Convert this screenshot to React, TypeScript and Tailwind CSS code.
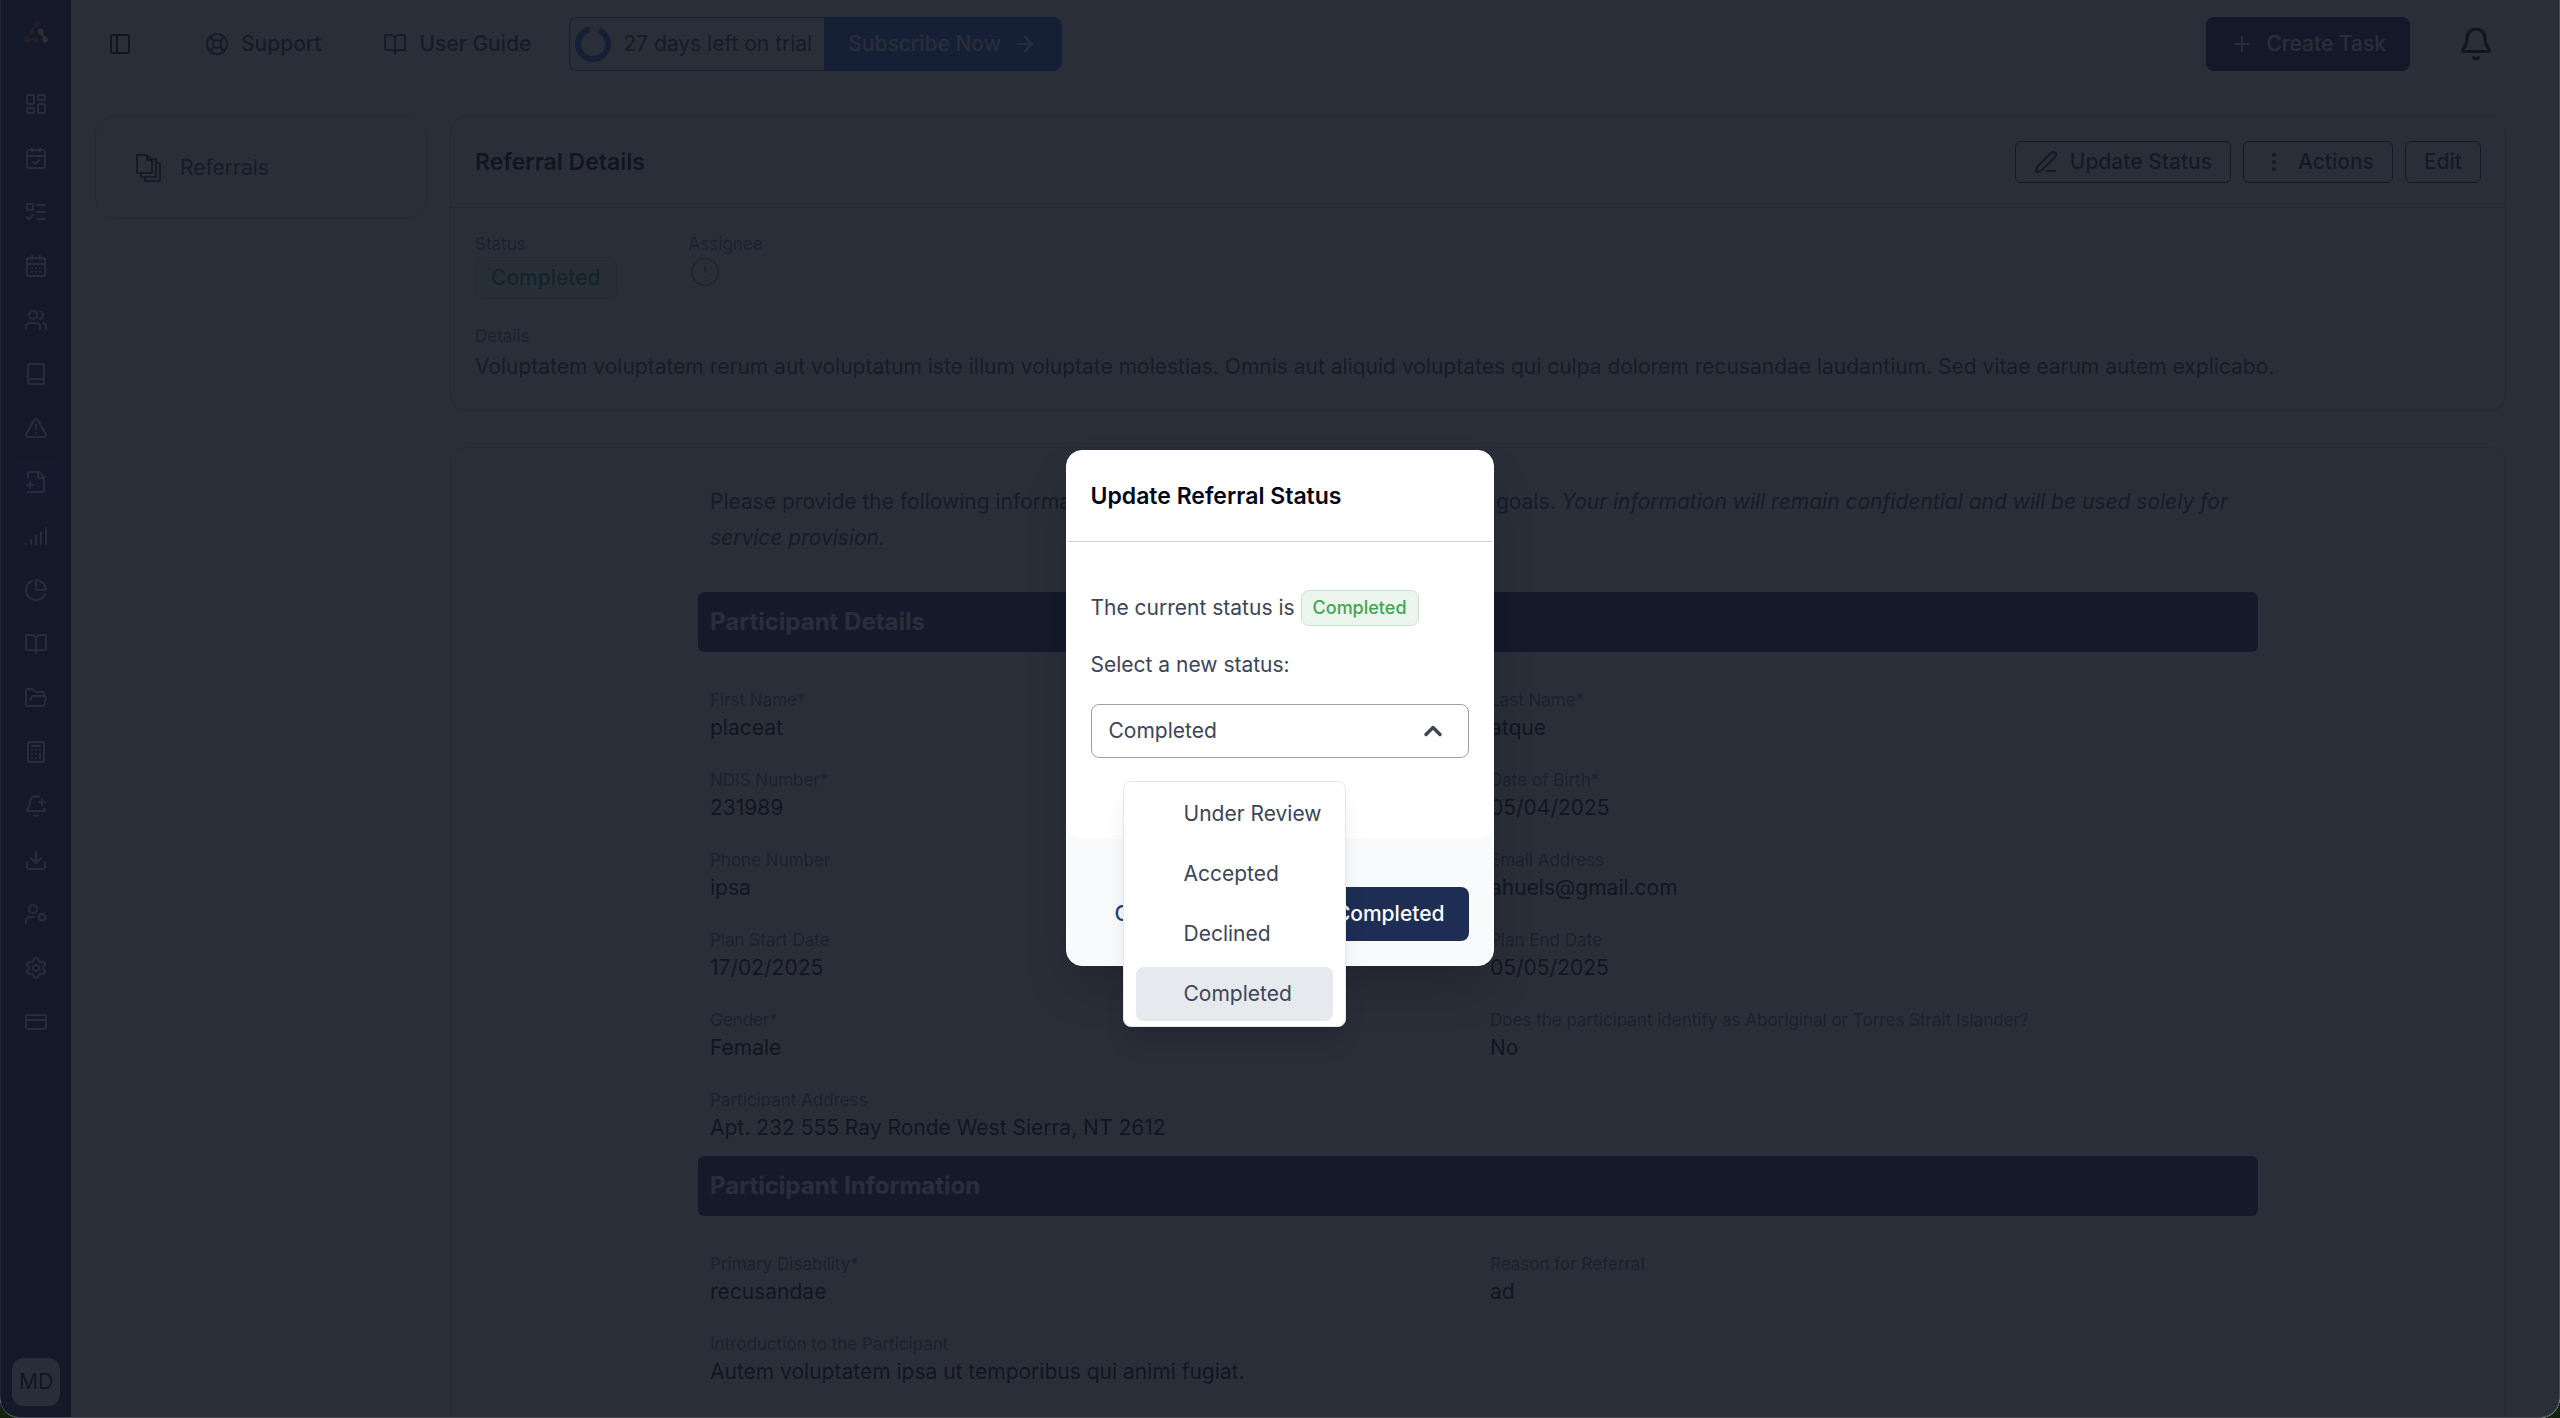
import { useState } from "react";
import type { ReactNode } from "react";
import {
  ArrowRight,
  Bell,
  BellPlus,
  Book,
  BookOpen,
  Calculator,
  CalendarCheck,
  CalendarDays,
  ChartPie,
  ChevronUp,
  CircleAlert,
  CreditCard,
  Download,
  EllipsisVertical,
  FolderOpen,
  LayoutDashboard,
  LifeBuoy,
  ListTodo,
  PanelLeft,
  PenLine,
  Plus,
  Settings,
  Signal,
  TriangleAlert,
  UserCog,
  Users,
} from "lucide-react";

function FileAdd({ className }: { className?: string }) {
  return (
    <svg
      viewBox="0 0 24 24"
      fill="none"
      stroke="currentColor"
      strokeWidth="2"
      strokeLinecap="round"
      strokeLinejoin="round"
      className={className}
    >
      <path d="M4 22h14a2 2 0 0 0 2-2V7l-5-5H6a2 2 0 0 0-2 2v4" />
      <path d="M14 2v4a2 2 0 0 0 2 2h4" />
      <path d="M3 15h6" />
      <path d="M6 12v6" />
    </svg>
  );
}

function FileStack({ className }: { className?: string }) {
  return (
    <svg viewBox="0 0 26 30" fill="none" stroke="currentColor" strokeWidth="1.5" className={className}>
      <path d="M1 2h10l5 5v13H1z" />
      <path d="M11 2v5h5" />
      <path d="M5 20v4h15V6h-4" />
      <path d="M9 24v4h15V10h-4" />
    </svg>
  );
}

function Logo() {
  return (
    <svg viewBox="0 0 24 22" className="h-[22px] w-6">
      <g stroke="#c2502c" fill="#c2502c" strokeLinecap="round">
        <path d="M12.5 3 7.5 10.5 2.8 18.5H12" fill="none" strokeWidth="2" />
        <circle cx="12.5" cy="3" r="2.5" />
        <circle cx="7.5" cy="10.5" r="2.5" />
        <circle cx="2.8" cy="18.5" r="2.5" />
        <circle cx="12" cy="18.5" r="2.5" />
      </g>
      <g stroke="#ffffff" fill="#ffffff">
        <path d="M16.5 11 21 18" strokeWidth="2.5" />
        <circle cx="16.5" cy="10.5" r="2.5" />
        <circle cx="21" cy="18.5" r="2.5" />
      </g>
    </svg>
  );
}

const navItems = [
  { icon: LayoutDashboard, label: "Dashboard" },
  { icon: CalendarCheck, label: "Roster" },
  { icon: ListTodo, label: "Tasks" },
  { icon: CalendarDays, label: "Calendar" },
  { icon: Users, label: "Participants" },
  { icon: Book, label: "Notes" },
  { icon: TriangleAlert, label: "Incidents" },
  { icon: FileAdd, label: "Referrals", active: true },
  { icon: Signal, label: "Activity" },
  { icon: ChartPie, label: "Reports" },
  { icon: BookOpen, label: "Policies" },
  { icon: FolderOpen, label: "Documents" },
  { icon: Calculator, label: "Billing" },
  { icon: BellPlus, label: "Reminders" },
  { icon: Download, label: "Exports" },
  { icon: UserCog, label: "Team" },
  { icon: Settings, label: "Settings" },
  { icon: CreditCard, label: "Subscription" },
];

const participantDetails = [
  ["First Name*", "placeat"],
  ["Last Name*", "atque"],
  ["NDIS Number*", "231989"],
  ["Date of Birth*", "05/04/2025"],
  ["Phone Number", "ipsa"],
  ["Email Address", "ahuels@gmail.com"],
  ["Plan Start Date", "17/02/2025"],
  ["Plan End Date", "05/05/2025"],
  ["Gender*", "Female"],
  ["Does the participant identify as Aboriginal or Torres Strait Islander?", "No"],
  ["Participant Address", "Apt. 232 555 Ray Ronde West Sierra, NT 2612"],
];

const statuses = ["Under Review", "Accepted", "Declined", "Completed"];

function Sidebar() {
  return (
    <aside className="flex w-[71px] shrink-0 flex-col items-center border-l border-slate-400 bg-[#1d2d54] pt-[21px] pb-3">
      <Logo />
      <nav className="mt-[38px] flex flex-1 flex-col gap-2">
        {navItems.map(({ icon: Icon, label, active }) => (
          <a
            key={label}
            href="#"
            aria-label={label}
            className={
              active
                ? "flex h-[46px] w-12 items-center justify-center rounded-lg bg-[#1e3a78] text-slate-200"
                : "flex h-[46px] w-12 items-center justify-center rounded-lg text-slate-200"
            }
          >
            <Icon className="size-6" />
          </a>
        ))}
      </nav>
      <button className="flex size-12 items-center justify-center rounded-xl bg-slate-100 text-[21px] text-slate-950">
        MD
      </button>
    </aside>
  );
}

function TopBar() {
  return (
    <header className="mr-[29px] flex items-center border-r border-b border-slate-200 pt-[17px] pr-9 pb-[21px] pl-[37px] font-medium text-slate-700">
      <button aria-label="Toggle sidebar" className="mr-[49px] text-slate-950">
        <PanelLeft className="size-6" />
      </button>
      <div className="flex gap-[14px]">
        <a href="#" className="flex h-[54px] items-center gap-3 rounded-lg border border-slate-100 px-[23px]">
          <LifeBuoy className="size-6" />
          Support
        </a>
        <a href="#" className="flex h-[54px] items-center gap-3 rounded-lg border border-slate-100 px-[23px]">
          <BookOpen className="size-6" />
          User Guide
        </a>
        <div className="flex h-[54px] overflow-hidden rounded-lg border border-[#2f6be0]">
          <div className="flex items-center gap-3 pr-3 pl-[5px] font-normal">
            <svg viewBox="0 0 36 36" className="size-9">
              <circle cx="18" cy="18" r="15" fill="none" stroke="#cbdcfb" strokeWidth="6" />
              <circle
                cx="18"
                cy="18"
                r="15"
                fill="none"
                stroke="#2f6be0"
                strokeWidth="6"
                pathLength="100"
                strokeDasharray="90 10"
                strokeDashoffset="-5"
                transform="rotate(-85 18 18)"
              />
            </svg>
            27 days left on trial
          </div>
          <a href="#" className="flex items-center gap-3 bg-[#2f6be0] px-6 text-slate-100">
            Subscribe Now
            <ArrowRight className="size-6" />
          </a>
        </div>
      </div>
      <button className="ml-auto flex h-[54px] items-center gap-3 rounded-lg bg-[#1d2d54] px-6 text-white">
        <Plus className="size-6" />
        Create Task
      </button>
      <button aria-label="Notifications" className="ml-12 text-slate-950">
        <Bell className="size-9" />
      </button>
    </header>
  );
}

function OutlineButton({ children }: { children: ReactNode }) {
  return (
    <button className="flex h-[42px] items-center gap-3 rounded-md border border-[#1d2d54] px-[18px] font-medium text-slate-800">
      {children}
    </button>
  );
}

function Field({ label, value }: { label: string; value: string }) {
  return (
    <div className="px-3">
      <dt className="text-[17px] leading-6 text-slate-500">{label}</dt>
      <dd className="leading-8 text-slate-950">{value}</dd>
    </div>
  );
}

function SectionTitle({ children }: { children: ReactNode }) {
  return (
    <h3 className="flex h-[60px] items-center rounded-md bg-[#1e3566] px-3 text-2xl font-bold text-white">
      {children}
    </h3>
  );
}

function ReferralDetails() {
  return (
    <section className="rounded-2xl border border-slate-300 shadow-sm">
      <div className="flex items-center justify-between border-b border-slate-300 px-6 py-6">
        <h2 className="text-[23px] font-semibold text-slate-950">Referral Details</h2>
        <div className="flex gap-3">
          <OutlineButton>
            <PenLine className="size-6" />
            Update Status
          </OutlineButton>
          <OutlineButton>
            <EllipsisVertical className="size-6" />
            Actions
          </OutlineButton>
          <OutlineButton>Edit</OutlineButton>
        </div>
      </div>
      <div className="px-6 pt-6 pb-7">
        <div className="flex gap-[72px]">
          <div>
            <p className="text-[17px] leading-6 text-slate-500">Status</p>
            <span className="mt-px flex h-[42px] items-center rounded-lg border border-emerald-200 bg-emerald-50 px-[15px] font-medium text-emerald-600">
              Completed
            </span>
          </div>
          <div>
            <p className="text-[17px] leading-6 text-slate-500">Assignee</p>
            <CircleAlert strokeWidth={1} className="size-8 text-slate-500" />
          </div>
        </div>
        <p className="mt-[25px] text-[17px] leading-6 text-slate-500">Details</p>
        <p className="mt-1 leading-[30px] text-slate-700">
          Voluptatem voluptatem rerum aut voluptatum iste illum voluptate molestias. Omnis aut aliquid
          voluptates qui culpa dolorem recusandae laudantium. Sed vitae earum autem explicabo.
        </p>
      </div>
    </section>
  );
}

function ReferralForm() {
  return (
    <section className="mt-9 rounded-2xl border border-slate-300 pt-9 pb-12">
      <div className="mx-auto max-w-[1560px]">
        <p className="mb-9 px-3 leading-9 text-slate-700">
          Please provide the following information to help us understand your needs and goals.{" "}
          <em>Your information will remain confidential and will be used solely for service provision.</em>
        </p>
        <SectionTitle>Participant Details</SectionTitle>
        <dl className="grid grid-cols-2 gap-y-6 pt-9 pb-3">
          {participantDetails.map(([label, value]) => (
            <Field key={label} label={label} value={value} />
          ))}
        </dl>
        <SectionTitle>Participant Information</SectionTitle>
        <dl className="grid grid-cols-2 gap-y-6 pt-9 pb-3">
          <Field label="Primary Disability*" value="recusandae" />
          <Field label="Reason for Referral" value="ad" />
          <div className="col-span-2">
            <Field label="Introduction to the Participant" value="Autem voluptatem ipsa ut temporibus qui animi fugiat." />
          </div>
        </dl>
      </div>
    </section>
  );
}

function UpdateStatusDialog() {
  const [status, setStatus] = useState("Completed");

  return (
    <div
      role="dialog"
      aria-labelledby="dialog-title"
      className="w-[428px] rounded-2xl border border-white bg-slate-50 shadow-2xl"
    >
      <div className="rounded-2xl bg-white">
        <h2
          id="dialog-title"
          className="flex h-[91px] items-center border-b border-gray-300 px-6 text-[23px] font-semibold text-slate-950"
        >
          Update Referral Status
        </h2>
        <div className="flex flex-col gap-6 px-6 pt-12 pb-[81px] text-[#3d4556]">
          <p className="flex items-center gap-[6px]">
            The current status is
            <span className="flex h-9 items-center rounded-lg border border-[#c5e6ca] bg-[#ebf5ed] px-[11px] text-lg font-medium text-[#43a556]">
              {status}
            </span>
          </p>
          <label htmlFor="new-status" className="leading-[30px]">
            Select a new status:
          </label>
          <div className="relative">
            <select
              id="new-status"
              value={status}
              onChange={(e) => setStatus(e.target.value)}
              className="h-[54px] w-full appearance-none rounded-lg border border-gray-400 bg-white px-[17px]"
            >
              {statuses.map((name) => (
                <option key={name}>{name}</option>
              ))}
            </select>
            <ChevronUp strokeWidth={3} className="pointer-events-none absolute top-[13px] right-[22px] size-7" />
            {/* Open menu */}
            <ul
              role="listbox"
              className="absolute top-[77px] left-8 z-10 flex w-[223px] flex-col gap-[6px] rounded-lg border border-gray-200 bg-white px-3 py-[5px] shadow-xl"
            >
              {statuses.map((name) => (
                <li
                  key={name}
                  role="option"
                  aria-selected={name === status}
                  onClick={() => setStatus(name)}
                  className={
                    name === status
                      ? "flex h-[54px] items-center rounded-lg bg-[#e6e9ee] pl-12"
                      : "flex h-[54px] items-center rounded-lg pl-12"
                  }
                >
                  {name}
                </li>
              ))}
            </ul>
          </div>
        </div>
      </div>
      <div className="flex justify-between px-6 pt-12 pb-6 font-medium">
        <button className="h-[54px] px-6 text-[#1c4476]">Cancel</button>
        <button className="h-[54px] rounded-lg bg-[#1d2d54] px-6 text-white">Set to Completed</button>
      </div>
    </div>
  );
}

export default function App() {
  return (
    <div className="h-screen bg-[#14230f] font-[Inter,sans-serif] text-[21px] leading-[30px]">
      <div className="relative flex h-full overflow-hidden rounded-b-[20px] bg-white">
        <Sidebar />
        <div className="min-w-0 flex-1">
          <TopBar />
          <div className="flex items-start gap-[23px] pt-[23px] pr-[54px] pl-6">
            <a
              href="#"
              className="flex h-[103px] w-[332px] shrink-0 items-center gap-[18px] rounded-[20px] border border-slate-300 px-10 text-slate-700"
            >
              <FileStack className="h-[30px] w-[26px] text-slate-950" />
              Referrals
            </a>
            <main className="min-w-0 flex-1">
              <ReferralDetails />
              <ReferralForm />
            </main>
          </div>
        </div>
        <div className="absolute inset-0 flex items-center justify-center rounded-b-[20px] border-r border-b border-[#474a55] bg-[#131724]/90 pb-[2px]">
          <UpdateStatusDialog />
        </div>
      </div>
    </div>
  );
}
